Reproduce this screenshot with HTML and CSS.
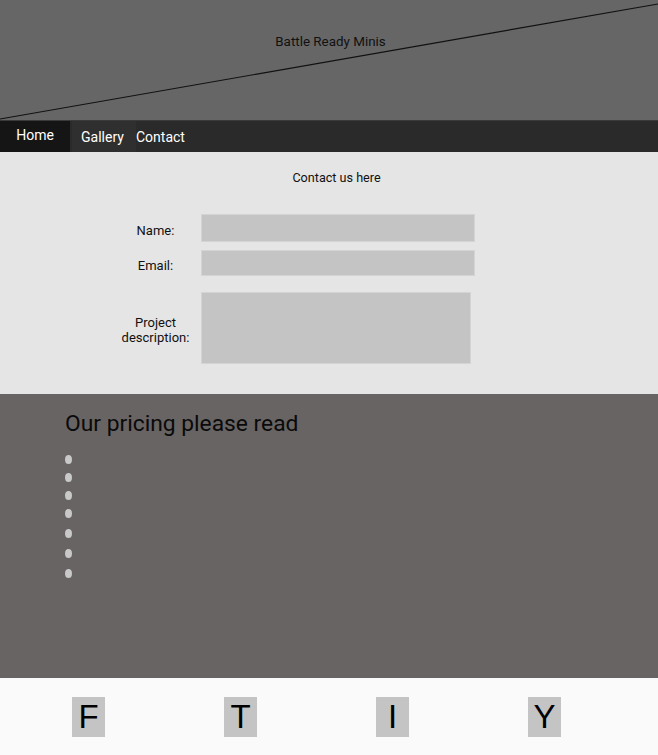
FILE: index.html
```html
<!DOCTYPE html>
<html lang="en">
<head>
    <meta charset="UTF-8">
    <meta name="viewport" content="width=device-width, initial-scale=1.0">
    <title>Battle Ready Minis - Contact</title>
    <link rel="stylesheet" href="styles.css">
</head>
<body>
    <header class="banner">
        <svg class="banner-line" viewBox="0 0 658 120" preserveAspectRatio="none">
            <line x1="0" y1="119" x2="658" y2="4" stroke="#111" stroke-width="1.2"/>
        </svg>
        <p class="banner-title">Battle Ready Minis</p>
    </header>

    <nav class="menu">
        <a href="#" class="menu-home">Home</a>
        <a href="#" class="menu-gallery">Gallery</a>
        <a href="#" class="menu-contact">Contact</a>
    </nav>

    <section class="contact">
        <p class="contact-title">Contact us here</p>
        <form class="contact-form">
            <div class="form-row row-name">
                <label for="name">Name:</label>
                <input type="text" id="name" class="field field-name">
            </div>
            <div class="form-row row-email">
                <label for="email">Email:</label>
                <input type="email" id="email" class="field field-email">
            </div>
            <div class="form-row row-project">
                <label for="project">Project description:</label>
                <textarea id="project" class="field field-project"></textarea>
            </div>
        </form>
    </section>

    <section class="pricing">
        <h2>Our pricing please read</h2>
        <ul class="price-list">
            <li></li>
            <li></li>
            <li></li>
            <li class="tall"></li>
            <li class="tall"></li>
            <li class="tall"></li>
            <li class="tall"></li>
        </ul>
    </section>

    <footer class="social">
        <a href="#" class="social-box">F</a>
        <a href="#" class="social-box">T</a>
        <a href="#" class="social-box">I</a>
        <a href="#" class="social-box">Y</a>
    </footer>
</body>
</html>
```

FILE: styles.css
```css
body {
    margin: 0;
    padding: 0;
    font-family: Roboto, "Liberation Sans", Arial, sans-serif;
    background-color: #fafafa;
}
.banner {
    position: relative;
    height: 120px;
    background-color: #666666;
    overflow: hidden;
}
.banner-line {
    position: absolute;
    top: 0;
    left: 0;
    width: 100%;
    height: 100%;
}
.banner-title {
    position: relative;
    margin: 0;
    padding: 34px 0 0 3px;
    text-align: center;
    font-size: 13.4px;
    color: #111;
}
.menu {
    display: flex;
    height: 31px;
    background-color: #2a2a2a;
    border-top: 1px solid #3a3a3a;
}
.menu a {
    color: #fff;
    text-decoration: none;
    font-size: 14px;
    line-height: 31px;
}
.menu-home {
    width: 70px;
    text-align: center;
    background-color: #151515;
    line-height: 29px !important;
}
.menu-gallery {
    box-sizing: border-box;
    width: 64px;
    margin-left: 2px;
    padding-left: 9px;
    background-color: #2f2f2f;
    line-height: 33px !important;
}
.menu-contact {
    line-height: 33px !important;
}
.contact {
    height: 242px;
    background-color: #e5e5e5;
    overflow: hidden;
}
.contact-title {
    margin: 0;
    padding: 18px 0 0 15px;
    text-align: center;
    font-size: 12.6px;
    color: #111;
}
.contact-form {
    margin-top: 29px;
    padding-left: 110px;
}
.form-row {
    display: flex;
    align-items: center;
}
.form-row label {
    width: 91px;
    text-align: center;
    font-size: 13px;
    color: #111;
    line-height: 15px;
}
.row-name label {
    padding-top: 5px;
}
.row-email {
    margin-top: 8px;
}
.row-email label {
    padding-top: 5px;
}
.row-project {
    margin-top: 16px;
}
.row-project label {
    padding-top: 4px;
}
.field {
    box-sizing: border-box;
    margin: 0;
    background-color: #c4c4c4;
    border: 1px solid #d4d4d4;
    font-family: inherit;
}
.field-name {
    width: 274px;
    height: 28px;
}
.field-email {
    width: 274px;
    height: 26px;
}
.field-project {
    width: 270px;
    height: 72px;
    resize: none;
}
.pricing {
    height: 284px;
    background-color: #686463;
    padding: 0 65px;
    overflow: hidden;
}
.pricing h2 {
    margin: 0;
    padding-top: 16px;
    font-size: 22.8px;
    font-weight: 400;
    color: #0a0a0a;
}
.price-list {
    list-style: none;
    margin: 18px 0 0;
    padding: 0;
}
.price-list li {
    position: relative;
    height: 18px;
}
.price-list li.tall {
    height: 20px;
}
.price-list li::before {
    content: "";
    position: absolute;
    left: 0;
    top: 0;
    width: 7px;
    height: 9px;
    border-radius: 50%;
    background-color: #c9c9c9;
}
.social {
    display: flex;
    gap: 119px;
    height: 77px;
    padding: 19px 0 0 72px;
    box-sizing: border-box;
    background-color: #fafafa;
}
.social-box {
    width: 33px;
    height: 40px;
    background-color: #c4c4c4;
    color: #000;
    text-decoration: none;
    text-align: center;
    font-family: "Liberation Sans", Arial, sans-serif;
    font-size: 33px;
    line-height: 40px;
}
```
